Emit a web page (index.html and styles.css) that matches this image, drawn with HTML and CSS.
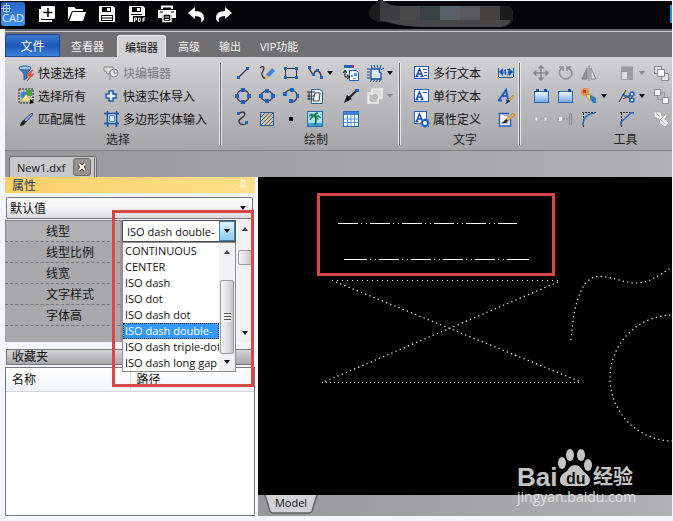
FILE: index.html
```
<!DOCTYPE html>
<html lang="zh-CN">
<head>
    <meta charset="UTF-8">
    <meta name="viewport" content="width=device-width, initial-scale=1.0">
    <title>CAD - New1.dxf</title>
    <link rel="stylesheet" href="styles.css">
</head>
<body>
    <svg class="defs" aria-hidden="true">
        <defs>
            <linearGradient id="blueFill" x1="0" y1="0" x2="0" y2="1">
                <stop offset="0" stop-color="#f4f9ff"/>
                <stop offset="1" stop-color="#6fa3ea"/>
            </linearGradient>
            <linearGradient id="logoFill" x1="0" y1="0" x2="0" y2="1">
                <stop offset="0" stop-color="#2a66c4"/>
                <stop offset="1" stop-color="#3f93ee"/>
            </linearGradient>
        </defs>
    </svg>

    <header class="titlebar">
        <svg class="logo" width="24" height="24" viewBox="0 0 24 24">
            <rect x="0" y="0" width="24" height="24" rx="3" fill="url(#logoFill)"/>
            <path d="M0 6.500h10M5.500 1v10M2.500 3.500h6v6h-6z" fill="none" stroke="#a8cbf5"/>
            <text class="logo-text" x="1" y="20">CAD</text>
        </svg>
        <nav class="quick">
            <button type="button" aria-label="新建"><svg width="18" height="18" viewBox="0 0 18 18"><path d="M2 4v12h12" fill="none" stroke="#fff" stroke-width="2"/><rect x="3" y="1" width="14" height="13" rx="1" fill="#fff"/><path d="M10 3v9M5.500 7.500h9" stroke="#000" stroke-width="1.500"/></svg></button>
            <button type="button" aria-label="打开"><svg width="18" height="18" viewBox="0 0 18 18"><path d="M0 15V3q0-1 1-1h5l2 2h6q1 0 1 1v1H4z" fill="#fff"/><path d="M4.500 7H18l-3 9H1.500z" fill="#fff"/></svg></button>
            <button type="button" aria-label="保存"><svg width="18" height="18" viewBox="0 0 18 18"><path d="M1 1h14l2 2v14H1z" fill="#fff"/><path d="M4 2h9v5H4zM3 10h12v6H3z" fill="#000"/><path d="M9 3h3v3H9zM4 11h10v1.500H4zM4 13.500h10V15H4z" fill="#fff"/></svg></button>
            <button type="button" aria-label="另存为PDF"><svg width="18" height="18" viewBox="0 0 18 18"><path d="M1 1h14l2 2v14H1z" fill="#fff"/><path d="M4 2h9v5H4zM3 9h11v1H3zM5 11h13v6H5z" fill="#000"/><path d="M9 3h3v3H9z" fill="#fff"/><path d="M6.500 17v-4h2v2h-2M10.500 13v3.500h1.500q1-2 0-3.500zM15 17v-4h2.500M15 15h2" fill="none" stroke="#fff"/></svg></button>
            <button type="button" aria-label="打印"><svg width="18" height="18" viewBox="0 0 18 18"><path d="M4 4V1.500h10V4" fill="none" stroke="#fff" stroke-width="2"/><path d="M0 5h18v8h-4v-3H4v3H0z" fill="#fff"/><path d="M2 7h3M13 7h3" stroke="#000"/><path d="M5 9v7.500h8V9z" fill="#000" stroke="#fff" stroke-width="1.500"/><path d="M7 12h4M7 14.500h4" stroke="#fff"/></svg></button>
            <button type="button" class="narrow" aria-label="撤销"><svg width="18" height="18" viewBox="0 0 18 18"><path d="M1 8l7-6v4q9 0 9 7 0 3-3 4 2-6-6-6v3z" fill="#fff"/></svg></button>
            <button type="button" class="narrow" aria-label="重做"><svg width="18" height="18" viewBox="0 0 18 18"><path d="M17 8l-7-6v4q-9 0-9 7 0 3 3 4-2-6 6-6v3z" fill="#fff"/></svg></button>
        </nav>
        <svg class="account" width="144" height="27" viewBox="0 0 144 27">
            <path d="M9 0h5q1 3 5 4l9 2h112q5 3 5 10-1 10-10 11H60q-30 0-44-5Q1 22 0 14 0 5 9 3z" fill="#1c1c1d"/>
            <path d="M11 1h4l6 4 10 1v14H11z" fill="#3d3c3e"/>
            <path d="M31 6h20v14H31z" fill="#4b4a4b"/>
            <path d="M51 6h20v14H51z" fill="#394243"/>
            <path d="M71 6h20v14H71z" fill="#58616a"/>
            <path d="M91 6h20v14H91z" fill="#59585c"/>
            <path d="M111 6h20v14h-20z" fill="#454342"/>
            <path d="M8 20h134q-3 6-10 7H60q-26 0-40-5z" fill="#484748"/>
        </svg>
        <span class="account-badge"></span>
    </header>

    <div class="app">
        <nav class="menu">
            <button type="button" class="file">文件</button>
            <button type="button" class="item">查看器</button>
            <button type="button" class="item active">编辑器</button>
            <button type="button" class="item">高级</button>
            <button type="button" class="item">输出</button>
            <button type="button" class="item">VIP功能</button>
        </nav>

        <div class="ribbon">
            <section class="group select">
                <div class="tools">
                    <button type="button"><svg width="18" height="18" viewBox="0 0 18 18"><path d="M2 4l5 6v6l3-2v-4l4-6z" fill="#3c7cc0" stroke="#245b9a"/><ellipse cx="8" cy="4" rx="6" ry="2" fill="#9cc6ee" stroke="#245b9a"/><path d="M15 6l-6 6h4l-3 5 7-7h-4l3-4z" fill="#f0564a" stroke="#b82a25" stroke-width=".5"/></svg>快速选择</button>
                    <button type="button" class="off"><svg width="18" height="18" viewBox="0 0 18 18"><path d="M2 3h9v4H8l-1 3H5L4 7H2z" fill="#ddd" stroke="#858585"/><circle cx="12" cy="9" r="4" fill="#eee" stroke="#858585"/><path d="M8 9v7M12 6v3h3" stroke="#858585" fill="none"/></svg>块编辑器</button>
                    <button type="button"><svg width="18" height="18" viewBox="0 0 18 18"><rect x="2" y="2" width="14" height="14" fill="none" stroke="#222" stroke-dasharray="2 1"/><rect x="9" y="3" width="6" height="6" fill="#4fa33c"/><circle cx="7" cy="8" r="3.500" fill="#3f7fce"/><path d="M4 14l5-7 5 7z" fill="#ffe680" stroke="#a8923a" stroke-width=".5"/><path d="M13 12v5l4-2z" fill="#000"/></svg>选择所有</button>
                    <button type="button"><svg width="18" height="18" viewBox="0 0 18 18"><path d="M7 4h4v3h3v4h-3v3H7v-3H4V7h3z" fill="#e7f1ff" stroke="#1d5bb0" stroke-width="1.500"/></svg>快速实体导入</button>
                    <button type="button"><svg width="18" height="18" viewBox="0 0 18 18"><path d="M15 3L7 10l2 2 7-8z" fill="#9bb7e0" stroke="#27447a"/><path d="M7 10l2 2q-2 4-6 4 1-5 4-6z" fill="#222"/></svg>匹配属性</button>
                    <button type="button"><svg width="18" height="18" viewBox="0 0 18 18"><rect x="6" y="4" width="8" height="9" fill="#d9eaff"/><path d="M5.500 1v16M14.500 1v16M2 3.500h15M2 13.500h15" stroke="#164f9f" stroke-width="1.500"/><path d="M7.500 5.500h5v6h-5z" fill="none" stroke="#4a8bdc"/></svg>多边形实体输入</button>
                </div>
                <h2>选择</h2>
            </section>
            <span class="sep"></span>
            <section class="group draw">
                <div class="tools">
                    <button type="button" aria-label="直线"><svg width="18" height="18" viewBox="0 0 18 18"><path d="M4 14L14 4" stroke="#333" stroke-width="1.300"/><path d="M3 12h3v3H3zM12 3h3v3h-3z" fill="#2160bd"/></svg></button>
                    <button type="button" aria-label="徒手画"><svg width="18" height="18" viewBox="0 0 18 18"><path d="M2 4q3-3 4 0c0 3-3 4-2 7q1 4 5 3" fill="none" stroke="#333" stroke-width="1.300"/><path d="M8 11l6-7 3 3-6 6z" fill="#3c7ed8"/><path d="M8 11l3 2-4 3z" fill="#f3b47f"/></svg></button>
                    <button type="button" aria-label="矩形"><svg width="18" height="18" viewBox="0 0 18 18"><rect x="3.500" y="4.500" width="11" height="9" fill="none" stroke="#333"/><path d="M2 3h3v3H2zM13 3h3v3h-3zM2 12h3v3H2zM13 12h3v3h-3z" fill="#2160bd"/></svg></button>
                    <button type="button" aria-label="多段线"><svg width="18" height="18" viewBox="0 0 18 18"><path d="M3 4l4 7h1q0-4 3-4 4 0 4 7" fill="none" stroke="#333" stroke-width="1.300"/><path d="M2 2h3v3H2zM6 9h3v3H6zM10 5h3v3h-3zM14 12h3v3h-3z" fill="#2160bd"/></svg><i class="arrow"></i></button>
                    <button type="button" aria-label="插入块"><svg width="18" height="18" viewBox="0 0 18 18"><rect x="2" y="1" width="10" height="3" fill="#2160bd"/><rect x="10" y="1" width="2" height="2" fill="#d33"/><path d="M2 4h10v6H2z" fill="#d6e7fb"/><path d="M7.500 6.500H14l2.500 2v8h-9z" fill="#fff" stroke="#2160bd"/><path d="M9 11h2v2H9zM12 9h3v3h-3zM11 14h3v1h-3z" fill="#5a93df"/><path d="M6 13H3V7M1 9l2-3 2 3M5 11l3 2-3 2" fill="none" stroke="#111"/></svg></button>
                    <button type="button" aria-label="云线"><svg width="18" height="18" viewBox="0 0 18 18"><path d="M5 5h9q-2 3 1 4v6H5z" fill="#dcebfb" stroke="#174fa0" stroke-width="1.300"/><path d="M1 5h3M1 8h3M1 11h3M1 14h3M5 1l1 3M8 1l1 3M11 1l1 3M15 1l-1 3M18 4l-3 2M6 15l-2 3M9 15l-2 3M12 15l-2 3M15 15l-2 3" stroke="#174fa0"/></svg><i class="arrow"></i></button>

                    <button type="button" aria-label="圆"><svg width="18" height="18" viewBox="0 0 18 18"><circle cx="9" cy="9" r="6" fill="none" stroke="#444" stroke-width="1.300"/><path d="M7 1h4v4H7zM1 7h4v4H1zM13 7h4v4h-4zM7 13h4v4H7z" fill="#2160bd"/></svg></button>
                    <button type="button" aria-label="椭圆"><svg width="18" height="18" viewBox="0 0 18 18"><ellipse cx="9" cy="9" rx="6" ry="5" fill="none" stroke="#444" stroke-width="1.300"/><path d="M7 2h4v4H7zM1 7h4v4H1zM13 7h4v4h-4zM7 12h4v4H7z" fill="#2160bd"/></svg></button>
                    <button type="button" aria-label="圆弧"><svg width="18" height="18" viewBox="0 0 18 18"><path d="M3 6q3-4 7-3 6 2 5 7-1 5-6 5" fill="none" stroke="#444" stroke-width="1.300"/><path d="M1 5h4v4H1zM8 1h4v4H8zM14 7h3v4h-3zM7 12h4v4H7z" fill="#2160bd"/></svg></button>
                    <button type="button" aria-label="视口"><svg width="18" height="18" viewBox="0 0 18 18"><path d="M5.500 2.500H14l2.500 2v12h-11z" fill="#edf5ff" stroke="#28659f"/><path d="M1 5h8M1 9h7M1 12h6M3 5v8" stroke="#333"/><path d="M9 6h5l-1 8H7z" fill="#fff" stroke="#444"/></svg></button>
                    <button type="button" aria-label="引线"><svg width="18" height="18" viewBox="0 0 18 18"><path d="M5 13L15 3" stroke="#222" stroke-width="2"/><path d="M2 16l3-8 5 4z" fill="#111"/><path d="M13 2h4v3h-3z" fill="#2160bd"/></svg></button>
                    <button type="button" class="off" aria-label="面域"><svg width="18" height="18" viewBox="0 0 18 18"><path d="M6 2h10v9h-4v5H2V6h4z" fill="#d9d8da" stroke="#eee" stroke-width="1.500"/><circle cx="9" cy="10" r="4" fill="#bbb" stroke="#f5f5f5"/><path d="M5 8v6h6" fill="none" stroke="#999"/></svg><i class="arrow"></i></button>

                    <button type="button" aria-label="样条曲线"><svg width="18" height="18" viewBox="0 0 18 18"><path d="M4 4q6-4 7 0c0 4-7 4-6 8q2 4 7 2" fill="none" stroke="#333" stroke-width="1.300"/><path d="M3 2h3v3H3zM11 11h3v3h-3z" fill="#2160bd"/></svg></button>
                    <button type="button" aria-label="填充"><svg width="18" height="18" viewBox="0 0 18 18"><rect x="2.500" y="2.500" width="13" height="13" fill="#c9c4b6" stroke="#2a5da8"/><path d="M3 7l4-4M3 11l8-8M3 15L15 3M7 15l8-8M11 15l4-4" stroke="#555"/></svg></button>
                    <button type="button" aria-label="点"><svg width="18" height="18" viewBox="0 0 18 18"><rect x="7" y="7" width="4" height="4" fill="#000"/></svg></button>
                    <button type="button" aria-label="图像"><svg width="18" height="18" viewBox="0 0 18 18"><rect x="1.500" y="1.500" width="15" height="15" fill="#a8e4f0" stroke="#2a6aa8"/><path d="M2 13h14v3H2z" fill="#3f9fd0"/><path d="M9 6q2 4 0 9" fill="none" stroke="#21533b" stroke-width="1.500"/><path d="M9 6Q5 2 3 6q3-1 6 0Q8 2 12 3q-2 1-3 3 5-1 6 2-3-2-6-2-5 0-5 4 2-3 5-4 3 1 3 4" fill="#1e8057" stroke="#1e8057"/></svg></button>
                    <button type="button" aria-label="表格"><svg width="18" height="18" viewBox="0 0 18 18"><rect x="1.500" y="1.500" width="15" height="15" fill="#fff" stroke="#2670bf"/><rect x="2" y="2" width="14" height="3" fill="#3a83d5"/><path d="M5.500 5v11M9 5v11M12.500 5v11M2 9h14M2 12.500h14" stroke="#5597df"/></svg></button>
                </div>
                <h2>绘制</h2>
            </section>
            <span class="sep"></span>
            <section class="group text">
                <div class="tools">
                    <button type="button"><svg width="18" height="18" viewBox="0 0 18 18"><rect x="2.500" y="2.500" width="14" height="12" fill="#fff" stroke="#2160bd"/><path d="M4.500 12L7.500 5l3 7M5.500 10h4M3.500 12.500h3M8.500 12.500h3" fill="none" stroke="#164ea3" stroke-width="1.500"/><path d="M11 5.500h4M12 8.500h3M12 11.500h3" stroke="#2160bd"/></svg>多行文本</button>
                    <button type="button" aria-label="标注文字"><svg width="18" height="18" viewBox="0 0 18 18"><path d="M1.500 4v9M16.500 4v9M2 13.500h14" stroke="#1d55a8"/><path d="M2 8l4-4v8zM16 8l-4-4v8z" fill="#1d55a8"/><path d="M8.500 11V5l-2 4h3M10 5.500h2l-1 6" fill="none" stroke="#2160bd"/></svg></button>
                    <button type="button"><svg width="18" height="18" viewBox="0 0 18 18"><rect x="2.500" y="2.500" width="14" height="12" fill="#fff" stroke="#2160bd"/><path d="M4.500 12L7.500 5l3 7M5.500 10h4M3.500 12.500h3M8.500 12.500h3" fill="none" stroke="#164ea3" stroke-width="1.500"/><path d="M11 5.500h4" stroke="#2160bd"/></svg>单行文本</button>
                    <button type="button" aria-label="文字样式"><svg width="18" height="18" viewBox="0 0 18 18"><path d="M2 13L9 3l2 9M5 9h5M1 13.500h4M9 13.500h3" fill="none" stroke="#2160bd" stroke-width="2"/><path d="M16 8l-5 5 2 1 4-5z" fill="#e3b64d" stroke="#876423" stroke-width=".5"/><path d="M11 13l2 1q-2 3-5 3z" fill="#222"/></svg></button>
                    <button type="button"><svg width="18" height="18" viewBox="0 0 18 18"><rect x="2.500" y="1.500" width="12" height="12" fill="#fff" stroke="#2160bd"/><path d="M4.500 11L7.500 4l3 7M5.500 9h4M3.500 11.500h3" fill="none" stroke="#164ea3" stroke-width="1.500"/><circle cx="13" cy="13" r="3" fill="#fff" stroke="#2160bd" stroke-width="2"/><path d="M13 8v2M13 16v2M8 13h2M16 13h2M9.500 9.500L11 11M15 15l2 2M16.500 9.500L15 11M9.500 16.500L11 15" stroke="#2160bd"/></svg>属性定义</button>
                    <button type="button" aria-label="编辑文字"><svg width="18" height="18" viewBox="0 0 18 18"><path d="M2 3.500h10M2.500 3v13h11V9" fill="#fff" stroke="#2160bd" stroke-width="1.500"/><path d="M4 13h7" stroke="#4b86da"/><path d="M16 3L9 9l2 2 7-6z" fill="#e3b64d" stroke="#876423" stroke-width=".5"/><path d="M9 9l2 2q-2 3-6 2z" fill="#222"/></svg></button>
                </div>
                <h2>文字</h2>
            </section>
            <span class="sep"></span>
            <section class="group modify">
                <div class="tools">
                    <button type="button" class="off" aria-label="移动"><svg width="18" height="18" viewBox="0 0 18 18"><path d="M9 2v14M2 9h14M6.500 4.500L9 2l2.500 2.500M6.500 13.500L9 16l2.500-2.500M4.500 6.500L2 9l2.500 2.500M13.500 6.500L16 9l-2.500 2.500" fill="none" stroke="#858487" stroke-width="1.500"/></svg></button>
                    <button type="button" class="off" aria-label="旋转"><svg width="18" height="18" viewBox="0 0 18 18"><path d="M6 4q-4 3-2 7 2 4 6 4 5-1 6-5 0-4-4-6M3 3h4v4M15 3h-4v4" fill="none" stroke="#8d8c8f" stroke-width="1.500"/></svg></button>
                    <button type="button" class="off" aria-label="镜像"><svg width="18" height="18" viewBox="0 0 18 18"><path d="M9 1v16" stroke="#858487"/><path d="M7 4v11H2z" fill="#939295" stroke="#7d7c7f"/><path d="M11 4v11h5z" fill="#ddd" stroke="#858487"/></svg></button>
                    <button type="button" class="off" aria-label="缩放"><svg width="18" height="18" viewBox="0 0 18 18"><path d="M3 2.500h12v13.500h-5V8H3z" fill="#9b9a9d"/><path d="M3.500 7.500h6v8h-6z" fill="#ddd" stroke="#666" stroke-dasharray="1 1"/></svg><i class="arrow"></i></button>
                    <button type="button" class="off" aria-label="前置"><svg width="18" height="18" viewBox="0 0 18 18"><path d="M2.500 2.500h7v7h-7zM9.500 9.500h7v7h-7z" fill="#e6e6e6" stroke="#88878a"/><path d="M5.500 5.500h7v7h-7z" fill="#fff" stroke="#88878a"/></svg></button>

                    <button type="button" aria-label="打断"><svg width="18" height="18" viewBox="0 0 18 18"><rect x="2.500" y="4.500" width="14" height="11" fill="url(#blueFill)" stroke="#2566b5"/><path d="M4 2h3v3H4zM12 2h3v3h-3z" fill="#174fa3"/></svg></button>
                    <button type="button" aria-label="打断于点"><svg width="18" height="18" viewBox="0 0 18 18"><rect x="2.500" y="4.500" width="14" height="11" fill="url(#blueFill)" stroke="#2566b5"/><path d="M12 2h3v3h-3z" fill="#174fa3"/></svg></button>
                    <button type="button" aria-label="分解"><svg width="18" height="18" viewBox="0 0 18 18"><circle cx="5" cy="5" r="4" fill="#f38a45"/><path d="M3 3h3v3H3z" fill="#c23d22"/><path d="M6 7l5 1 4 3-4 3-4-3z" fill="#f3d46b" stroke="#81733a" stroke-width=".5"/><path d="M10 8l6 3v5h-3l-3-4z" fill="#2b7bb9"/></svg><i class="arrow"></i></button>
                    <button type="button" aria-label="修剪"><svg width="18" height="18" viewBox="0 0 18 18"><path d="M1 15L8 3M11 15l5-9M5 7l9 6M5 12l9-5" stroke="#333"/><circle cx="14" cy="7" r="2" fill="#dceaff" stroke="#2160bd" stroke-width="1.500"/><circle cx="14" cy="13" r="2" fill="#dceaff" stroke="#2160bd" stroke-width="1.500"/><path d="M4 8l8 2" stroke="#2160bd" stroke-width="1.500"/></svg><i class="arrow"></i></button>
                    <button type="button" class="off" aria-label="后置"><svg width="18" height="18" viewBox="0 0 18 18"><path d="M5.500 5.500h7v7h-7z" fill="#b6b5b8" stroke="#949396"/><path d="M2.500 2.500h6v6h-6zM10.500 10.500h6v6h-6z" fill="#fff" stroke="#88878a"/></svg></button>

                    <button type="button" class="off" aria-label="合并"><svg width="18" height="18" viewBox="0 0 18 18"><path d="M2 9h14" stroke="#999" stroke-dasharray="2 1"/><path d="M3 7h3v4H3zM12 7h3v4h-3z" fill="#eee" stroke="#aaa"/></svg></button>
                    <button type="button" class="off" aria-label="延伸"><svg width="18" height="18" viewBox="0 0 18 18"><path d="M1 9h12" stroke="#888" stroke-dasharray="2 1"/><path d="M3 7h3v4H3z" fill="#eee"/><path d="M13.500 3v12M15.500 3v12" stroke="#858487"/></svg></button>
                    <button type="button" aria-label="圆角"><svg width="18" height="18" viewBox="0 0 18 18"><path d="M3.500 17V2M2 2.500h14" stroke="#222" stroke-dasharray="2 1"/><path d="M3 16q0-12 12-13" fill="none" stroke="#286fc6" stroke-width="1.500"/></svg></button>
                    <button type="button" aria-label="倒角"><svg width="18" height="18" viewBox="0 0 18 18"><path d="M3.500 17V2M2 2.500h14" stroke="#222" stroke-dasharray="2 1"/><path d="M3 16v-4l10-9h3" fill="none" stroke="#286fc6" stroke-width="1.500"/></svg></button>
                    <button type="button" class="off" aria-label="清理"><svg width="18" height="18" viewBox="0 0 18 18"><path d="M2 2h7l1 4 6-3-3 6 4 4-4 4-5-3-1-5-5-2z" fill="#f0f0f0" stroke="#aaa"/><path d="M4 3l4 4M8 9l5 5M13 5l-4 4" stroke="#aaa"/></svg></button>
                </div>
                <h2>工具</h2>
            </section>
        </div>

        <div class="doc-tabs">
            <div class="doc-tab">
                <span>New1.dxf</span>
                <button type="button" class="close" aria-label="关闭"><svg width="10" height="10" viewBox="0 0 10 10"><path d="M2 2l6 6M8 2L2 8" stroke="#4d4b45" stroke-width="4"/><path d="M2 2l6 6M8 2L2 8" stroke="#fffbe6" stroke-width="2"/></svg></button>
            </div>
        </div>

        <main class="work">
            <aside class="dock">
                <h3 class="dock-title">属性
                    <svg width="8" height="10" viewBox="0 0 8 10"><path d="M2.500 1v5M5.500 1v5M2 .500h4M0 6.500h8M4 7v3" fill="none" stroke="#fffbe8"/></svg>
                </h3>
                <div class="preset-wrap">
                    <select class="preset" aria-label="默认值"><option>默认值</option></select>
                    <i class="arrow"></i>
                </div>
                <div class="props">
                    <div class="names">
                        <label class="current" for="linetype">线型</label>
                        <span>线型比例</span>
                        <span>线宽</span>
                        <span>文字样式</span>
                        <span>字体高</span>
                    </div>
                    <div class="values">
                        <div class="combo">
                            <input type="text" id="linetype" value="ISO dash double-">
                            <button type="button" aria-label="展开"><i class="arrow"></i></button>
                        </div>
                        <div class="popup">
                            <select size="8" aria-label="线型列表">
                                <option>CONTINUOUS</option>
                                <option>CENTER</option>
                                <option>ISO dash</option>
                                <option>ISO dot</option>
                                <option>ISO dash dot</option>
                                <option selected>ISO dash double-</option>
                                <option>ISO dash triple-dot</option>
                                <option>ISO dash long gap</option>
                            </select>
                            <div class="scroll">
                                <i class="arrow up"></i>
                                <div class="thumb"><i class="grip"></i></div>
                                <i class="arrow"></i>
                            </div>
                        </div>
                    </div>
                    <div class="scroll side">
                        <i class="arrow up"></i>
                        <div class="thumb"></div>
                        <i class="arrow"></i>
                    </div>
                </div>
                <h3 class="fav-title">收藏夹</h3>
                <div class="fav">
                    <table>
                        <thead><tr><th class="name">名称</th><th>路径</th></tr></thead>
                    </table>
                </div>
                <div class="mark mark-dock"></div>
            </aside>

            <section class="view">
                <svg class="drawing">
                    <g fill="none" stroke="#fff">
                        <path d="M80 46.500h179" stroke-dasharray="20 3 1 4 1 3"/>
                        <path d="M86 82.500h3"/>
                        <path d="M89 82.500h179" stroke-dasharray="20 3 1 4 1 3"/>
                        <path d="M268 82.500h3"/>
                        <path d="M74 103.500h229" stroke-dasharray="1 4"/>
                        <path d="M64 205.500h259" stroke-dasharray="1 3"/>
                        <g stroke-width="1.200" stroke-dasharray="1.200 3.300">
                            <path d="M78 105L323 205"/>
                            <path d="M300 105L66 205"/>
                            <path d="M313 163c2-22 4-38 11-51 6-12 14-14 24-12 12 2 20 6 30 6 12 0 21-6 36-16"/>
                            <circle cx="415" cy="201" r="63"/>
                        </g>
                    </g>
                </svg>
                <div class="mark mark-view"></div>
                <footer class="layouts">
                    <button type="button" class="layout">
                        <svg width="54" height="19" viewBox="0 0 54 19"><path d="M1 0l5 16q1 2 3 2h36q2 0 3-2l5-16" fill="#d2d1d4" stroke="#626164" stroke-width="1.500"/></svg>
                        <span>Model</span>
                    </button>
                </footer>
                <svg class="watermark" width="124" height="60" viewBox="0 0 124 60">
                    <g fill="#c4c4c4">
                        <text class="wm-name" x="1" y="36">Bai</text>
                        <ellipse cx="46" cy="13" rx="4" ry="6"/>
                        <ellipse cx="54" cy="5" rx="4" ry="6"/>
                        <ellipse cx="65" cy="5" rx="4" ry="6"/>
                        <ellipse cx="72" cy="15" rx="4" ry="6"/>
                        <path d="M59 15q5 0 8 6 7 5 7 9 0 6-7 6H51q-8 0-7-7 1-5 7-8 3-6 8-6z"/>
                        <text class="wm-cjk" x="77" y="34">经验</text>
                        <text class="wm-url" x="1" y="52">jingyan.baidu.com</text>
                    </g>
                    <text class="wm-du" x="50" y="34">du</text>
                </svg>
            </section>
        </main>
    </div>
</body>
</html>
```

FILE: styles.css
```
* {
    box-sizing: border-box;
}
body {
    margin: 0;
    height: 100vh;
    display: flex;
    flex-direction: column;
    overflow: hidden;
    padding: 1px 1px 5px 0;
    background: #f4f6fb;
    font-family: "Open Sans", "Noto Sans CJK SC", sans-serif;
    font-size: 12px;
    color: #111;
}
button, select, input {
    font: inherit;
    color: inherit;
    margin: 0;
    padding: 0;
    border: none;
    background: none;
}
h2, h3 {
    margin: 0;
    font-size: 12px;
    font-weight: normal;
}
svg {
    flex: none;
    display: block;
}
.defs {
    position: absolute;
    width: 0;
    height: 0;
}
.arrow {
    flex: none;
    border: 3px solid transparent;
    border-top: 4px solid #111;
    border-bottom: none;
}
.arrow.up {
    border-top: none;
    border-bottom: 4px solid #444;
}

/* title bar */
.titlebar {
    flex: none;
    position: relative;
    height: 28px;
    display: flex;
    align-items: center;
    padding: 0 0 2px 1px;
    background: #050507;
}
.logo-text {
    font-size: 11px;
    fill: #e3f0ff;
}
.quick {
    display: flex;
    margin-left: 7px;
}
.quick button {
    width: 30px;
    display: flex;
    justify-content: center;
}
.quick .narrow {
    width: 28px;
}
.account {
    position: absolute;
    left: 369px;
    top: -1px;
}
.account-badge {
    width: 2px;
    height: 18px;
    margin-left: auto;
    background: #2c8fd8;
}

.app {
    flex: 1;
    min-height: 0;
    margin-left: 5px;
    display: flex;
    flex-direction: column;
}

/* menu */
.menu {
    flex: none;
    height: 28px;
    display: flex;
    align-items: flex-end;
    background: #706f71;
    border-top: 2px solid #67666a;
    box-shadow: inset 0 1px #c9c8cb;
    font-size: 11px;
    color: #f5f5f5;
}
.menu .file {
    width: 55px;
    height: 23px;
    border: 1px solid #1b4795;
    border-radius: 3px 3px 0 0;
    background: linear-gradient(#3d7bd2, #1e57b5 50%, #3a80da);
    font-size: 12px;
    color: #fff;
}
.menu .item {
    height: 22px;
    padding: 0 8px 0 11px;
}
.menu .active {
    margin: 0 1px 0 5px;
    padding: 0 7px;
    border-radius: 3px 3px 0 0;
    border: 1px solid #eee;
    border-bottom: none;
    background: #d2d1d4;
    color: #111;
}

/* ribbon */
.ribbon {
    flex: none;
    height: 94px;
    display: flex;
    overflow: hidden;
    padding-top: 4px;
    background: linear-gradient(#d2d1d4, #bcbbbe 45%, #a6a5a8);
    border-bottom: 1px solid #7e7d80;
}
.group {
    flex: none;
}
.tools {
    display: grid;
    grid-auto-rows: 23px;
}
.tools button {
    display: flex;
    align-items: center;
    gap: 3px;
    white-space: nowrap;
}
.tools .off {
    color: #7b7a7d;
}
.off .arrow {
    border-top-color: #858487;
}
.group h2 {
    line-height: 20px;
    text-align: center;
    color: #222;
}
.select {
    width: 214px;
    padding-left: 12px;
}
.select .tools {
    grid-template-columns: 85px 1fr;
}
.draw {
    width: 176px;
    padding-left: 12px;
}
.draw .tools {
    grid-template-columns: 24px 24px 24px 36px 24px 32px;
}
.text {
    width: 117px;
    padding-left: 11px;
}
.text .tools {
    grid-template-columns: 85px 1fr;
}
.modify {
    width: 198px;
    padding-left: 11px;
}
.modify .tools {
    grid-template-columns: 24px 24px 38px 34px 24px;
}
.sep {
    flex: none;
    width: 3px;
    height: 82px;
    margin-top: 2px;
    background: #6b6a6d;
    border: 1px solid #e9e8eb;
    border-width: 0 1px;
}

/* document tabs */
.doc-tabs {
    flex: none;
    height: 26px;
    display: flex;
    align-items: flex-end;
    padding: 0 4px;
    background: linear-gradient(90deg, #98979a, #b0afb2);
}
.doc-tab {
    display: flex;
    align-items: center;
    gap: 8px;
    height: 21px;
    padding: 0 3px 0 7px;
    border: 1px solid #6d6c6f;
    border-right: 3px double #6d6c6f;
    border-bottom: none;
    border-radius: 3px 3px 0 0;
    background: #c9c8cb;
    font-size: 11px;
}
.close {
    width: 18px;
    height: 18px;
    display: flex;
    align-items: center;
    justify-content: center;
    border: 1px solid #6e6d68;
    border-radius: 3px;
    background: #96948d;
}

/* dock */
.work {
    flex: 1;
    min-height: 0;
    display: flex;
    gap: 3px;
}
.dock {
    flex: none;
    position: relative;
    width: 250px;
    display: flex;
    flex-direction: column;
}
.dock-title {
    flex: none;
    display: flex;
    align-items: center;
    justify-content: space-between;
    height: 16px;
    margin-bottom: 4px;
    padding: 0 8px 0 7px;
    background: linear-gradient(90deg, #fbcf68, #fde08c);
    color: #27405c;
}
.preset-wrap {
    flex: none;
    display: flex;
    align-items: center;
    height: 22px;
    margin: 0 2px 1px 1px;
    padding-right: 6px;
    border: 1px solid #77767a;
    border-radius: 2px;
    background: linear-gradient(#fff, #eeeef0 60%, #dcdcdf);
}
.preset {
    flex: 1;
    appearance: none;
    padding-left: 3px;
}
.props {
    flex: none;
    display: flex;
    height: 122px;
    background: #f8f8fa;
}
.names {
    width: 117px;
    background: #a9a8ab;
    border-right: 2px solid #98979a;
}
.names > * {
    display: block;
    height: 21px;
    padding-left: 41px;
    line-height: 21px;
    border-bottom: 1px dashed #757477;
}
.names .current {
    height: 22px;
    border-top: 1px solid #858487;
    border-left: 1px solid #858487;
    padding-left: 40px;
    background: #b1b0b3;
}
.values {
    position: relative;
    width: 114px;
}
.combo {
    display: flex;
    height: 22px;
    border: 1px solid #4e4e52;
    background: #fff;
}
.combo input {
    flex: 1;
    min-width: 0;
    padding-left: 4px;
    font-size: 11px;
    outline: none;
}
.combo button {
    width: 16px;
    display: flex;
    align-items: center;
    justify-content: center;
    border: 1px solid #3c7fb1;
    background: linear-gradient(#e3f4fd, #b5dff6 50%, #8fcbec);
}
.popup {
    position: absolute;
    z-index: 2;
    left: 0;
    top: 22px;
    width: 114px;
    display: flex;
    border: 1px solid #8c8b8f;
    background: #fff;
}
.popup select {
    flex: 1;
    min-width: 0;
    height: 128px;
    overflow: hidden;
    font-size: 11px;
    outline: none;
    border-radius: 0;
}
.popup option {
    height: 16px;
    min-height: 16px;
    padding: 0 2px;
    line-height: 16px;
}
.popup option:checked {
    background: #3399ff linear-gradient(#3399ff, #3399ff);
    color: #fff;
    outline: 1px dotted #222;
    outline-offset: -1px;
}
.scroll {
    width: 16px;
    display: flex;
    flex-direction: column;
    align-items: center;
    justify-content: space-between;
    padding: 7px 0;
    background: #f1f1f3;
}
.scroll .thumb {
    width: 14px;
    height: 74px;
    margin-top: 26px;
    margin-bottom: 6px;
    border: 1px solid #9a999d;
    border-radius: 2px;
    background: linear-gradient(90deg, #f5f5f5, #e2e2e4 50%, #c6c6c9);
    display: flex;
    align-items: center;
    justify-content: center;
}
.grip {
    width: 7px;
    height: 9px;
    background: repeating-linear-gradient(#555 0 1px, #f0f0f0 1px 3px);
}
.side {
    margin-left: 1px;
}
.side .thumb {
    height: 15px;
    margin: 0 0 48px;
}
.fav-title {
    flex: none;
    height: 16px;
    margin: 7px 1px 2px;
    padding-left: 5px;
    line-height: 14px;
    border: 1px solid #77767a;
    background: linear-gradient(#d5d4d7, #a8a7aa);
}
.fav {
    flex: 1;
    border: 1px solid #77767a;
    background: #fff;
}
.fav table {
    width: 100%;
    border-collapse: collapse;
}
.fav th {
    height: 23px;
    padding: 0 6px;
    text-align: left;
    font-weight: normal;
    border-bottom: 1px solid #d5d5d8;
    background: linear-gradient(#fff, #f2f3f6);
}
.fav .name {
    width: 124px;
    border-right: 1px solid #dedee2;
}
.mark {
    position: absolute;
    z-index: 3;
    border: 3px solid #d94848;
    pointer-events: none;
}
.mark-dock {
    left: 107px;
    top: 33px;
    width: 142px;
    height: 177px;
}

/* drawing view */
.view {
    position: relative;
    flex: 1;
    min-width: 0;
    display: flex;
    flex-direction: column;
    background: #000;
}
.drawing {
    flex: 1;
    width: 100%;
    min-height: 0;
}
.mark-view {
    left: 59px;
    top: 16px;
    width: 238px;
    height: 83px;
}
.layouts {
    flex: none;
    height: 21px;
    padding-left: 6px;
    background: linear-gradient(90deg, #98979a, #b0afb2);
}
.layout {
    display: grid;
    justify-items: center;
    font-size: 11px;
}
.layout > * {
    grid-area: 1 / 1;
}
.layout span {
    line-height: 16px;
}
.watermark {
    position: absolute;
    right: 32px;
    bottom: 6px;
    overflow: visible;
}
.wm-name {
    font: bold 26px "Liberation Sans", sans-serif;
}
.wm-cjk {
    font: bold 20px "Noto Sans CJK SC", sans-serif;
}
.wm-url {
    font: 14px "Open Sans", sans-serif;
    fill: #e2e2e2;
}
.wm-du {
    font: bold 16px "Liberation Sans", sans-serif;
    fill: #111;
}
```
